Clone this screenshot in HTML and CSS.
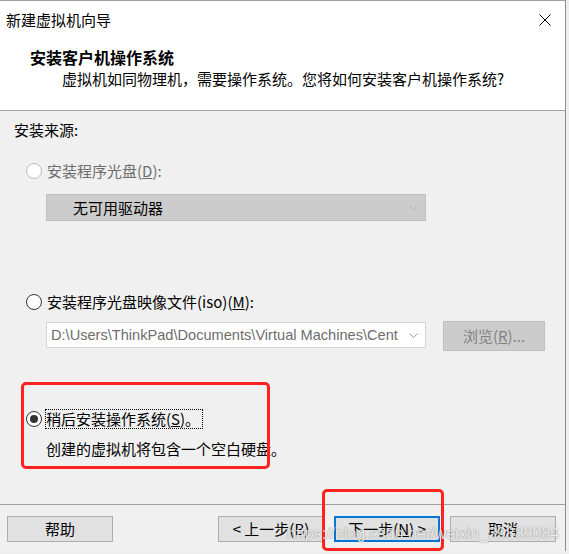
FILE: index.html
```html
<!DOCTYPE html>
<html lang="zh-CN">
<head>
<meta charset="utf-8">
<title>新建虚拟机向导</title>
<link rel="stylesheet" href="styles.css">
</head>
<body>
<div class="window">
  <div class="header">
    <div class="titlebar">
      <span class="title">新建虚拟机向导</span>
      <svg class="close" width="12" height="12" viewBox="0 0 12 12"><path d="M0.5 0.5 L11.5 11.5 M11.5 0.5 L0.5 11.5" stroke="#000" stroke-width="1" fill="none"/></svg>
    </div>
    <div class="h-title">安装客户机操作系统</div>
    <div class="h-sub">虚拟机如同物理机，需要操作系统。您将如何安装客户机操作系统?</div>
  </div>

  <div class="content">
    <div class="source-label">安装来源:</div>

    <div class="radio-row row-disc is-disabled">
      <span class="radio"></span>
      <span class="label">安装程序光盘(<u>D</u>):</span>
    </div>
    <div class="combo combo-disabled">
      <span class="combo-value">无可用驱动器</span>
      <span class="combo-arrow"><svg width="9" height="5" viewBox="0 0 9 5"><path d="M0.5 0.5 L4.5 4.5 L8.5 0.5" stroke="#b4b4b4" fill="none"/></svg></span>
    </div>

    <div class="radio-row row-iso">
      <span class="radio"></span>
      <span class="label">安装程序光盘映像文件(iso)(<u>M</u>):</span>
    </div>
    <div class="iso-row">
      <div class="combo combo-path">
        <span class="combo-value">D:\Users\ThinkPad\Documents\Virtual Machines\Cent</span>
        <span class="combo-arrow"><svg width="9" height="5" viewBox="0 0 9 5"><path d="M0.5 0.5 L4.5 4.5 L8.5 0.5" stroke="#9a9a9a" fill="none"/></svg></span>
      </div>
      <div class="browse">浏览(<u>R</u>)...</div>
    </div>

    <div class="radio-row row-later">
      <span class="radio checked"></span>
      <span class="label focus">稍后安装操作系统(<u>S</u>)。</span>
    </div>
    <div class="desc">创建的虚拟机将包含一个空白硬盘。</div>
  </div>

  <div class="footer">
    <div class="btn">帮助</div>
    <div class="btn btn-back">&lt; 上一步(B)</div>
    <div class="btn btn-next">下一步(<u>N</u>) &gt;</div>
    <div class="btn btn-cancel">取消</div>
  </div>

  <div class="mark mark-later"></div>
  <div class="mark mark-next"></div>
  <div class="watermark">https://blog.csdn.net/weixin_39889084</div>
</div>
</body>
</html>
```

FILE: styles.css
```css
html, body {
  margin: 0;
  padding: 0;
  background: #eeeeee;
}

body {
  font-family: "Noto Sans CJK SC", "Noto Sans", sans-serif;
  font-size: 15px;
  color: #000;
}

.window {
  position: relative;
  box-sizing: border-box;
  width: 566px;
  height: 551px;
  border-top: 1px solid #a0a0a0;
  border-right: 1px solid #8c8c8c;
  background: #f0f0f0;
  display: flex;
  flex-direction: column;
}

/* header */
.header {
  background: #ffffff;
  box-sizing: content-box;
  height: 100px;
  padding-top: 9px;
  border-bottom: 1px solid #a0a0a0;
}

.titlebar {
  display: flex;
  justify-content: space-between;
  align-items: center;
  height: 20px;
  line-height: 20px;
  padding: 0 14px 0 6px;
}

.close {
  display: block;
}

.h-title {
  margin-top: 17px;
  padding-left: 30px;
  font-size: 16px;
  font-weight: bold;
  line-height: 20px;
}

.h-sub {
  margin-top: 2px;
  padding-left: 62px;
  line-height: 20px;
}

/* content */
.content {
  flex: 1;
  padding-left: 14px;
}

.source-label {
  margin-top: 9px;
  line-height: 20px;
}

.radio-row {
  display: flex;
  align-items: center;
  height: 20px;
  line-height: 20px;
  padding-left: 12px;
}

.row-disc { margin-top: 21px; }
.row-iso { margin-top: 71px; }
.row-later { margin-top: 58px; }

.radio {
  box-sizing: border-box;
  width: 16px;
  height: 16px;
  border-radius: 50%;
  border: 1px solid #333333;
  background: #ffffff;
  position: relative;
  flex: none;
}

.radio.checked::after {
  content: "";
  position: absolute;
  left: 3px;
  top: 3px;
  width: 8px;
  height: 8px;
  border-radius: 50%;
  background: #333333;
}

.radio-row .label {
  margin-left: 5px;
}

.is-disabled .radio {
  border-color: #bcbcbc;
}

.is-disabled .label {
  color: #6d6d6d;
}

.label.focus {
  margin-left: 3px;
  border: 1px dotted #000;
  line-height: 18px;
  padding-right: 2px;
}

.combo {
  box-sizing: border-box;
  display: flex;
  align-items: center;
  width: 380px;
  margin-left: 32px;
}

.combo-value {
  flex: 1;
  min-width: 0;
  overflow: hidden;
  white-space: nowrap;
}

.combo-arrow {
  width: 23px;
  flex: none;
  display: flex;
  justify-content: center;
  align-items: center;
}

.combo-arrow svg {
  display: block;
}

.combo-disabled {
  margin-top: 13px;
  height: 27px;
  background: #cccccc;
  border: 1px solid #bfbfbf;
}

.combo-disabled .combo-value {
  padding-left: 26px;
  line-height: 25px;
}

.iso-row {
  display: flex;
  align-items: flex-start;
  margin-top: 9px;
  height: 30px;
}

.combo-path {
  margin-top: 1px;
  height: 26px;
  background: #ffffff;
  border: 1px solid #d4d4d4;
}

.combo-path .combo-value {
  padding-left: 4px;
  line-height: 24px;
  color: #6d6d6d;
  font-family: "Liberation Sans", "Noto Sans CJK SC", sans-serif;
  font-size: 14.6px;
}

.browse {
  box-sizing: border-box;
  margin-left: 17px;
  width: 102px;
  height: 30px;
  background: #cccccc;
  border: 1px solid #bfbfbf;
  color: #838383;
  text-align: center;
  line-height: 28px;
}

.desc {
  margin-top: 10px;
  padding-left: 32px;
  line-height: 20px;
}

/* footer */
.footer {
  border-top: 1px solid #a0a0a0;
  height: 47px;
  box-sizing: border-box;
  padding: 11px 9px 0 7px;
  display: flex;
  align-items: flex-start;
}

.btn {
  box-sizing: border-box;
  width: 106px;
  height: 26px;
  background: #e1e1e1;
  border: 1px solid #adadad;
  text-align: center;
  line-height: 24px;
}

.btn-back { margin-left: auto; }
.btn-next {
  margin-left: 10px;
  border: 2px solid #0078d7;
  line-height: 22px;
}
.btn-cancel { margin-left: 10px; }

/* annotations */
.mark {
  position: absolute;
  box-sizing: border-box;
  border: 3px solid #ff2222;
  border-radius: 5px;
}

.mark-later {
  left: 21px;
  top: 381px;
  width: 249px;
  height: 87px;
}

.mark-next {
  left: 322px;
  top: 488px;
  width: 122px;
  height: 62px;
}

.watermark {
  position: absolute;
  left: 287px;
  top: 523px;
  font-family: "Liberation Sans", Arial, sans-serif;
  font-size: 16px;
  line-height: 20px;
  color: rgba(255, 255, 255, 0.85);
  text-shadow: 0 0 1px rgba(0, 0, 0, 0.35), 0 0 2px rgba(0, 0, 0, 0.2);
  white-space: nowrap;
}
```
